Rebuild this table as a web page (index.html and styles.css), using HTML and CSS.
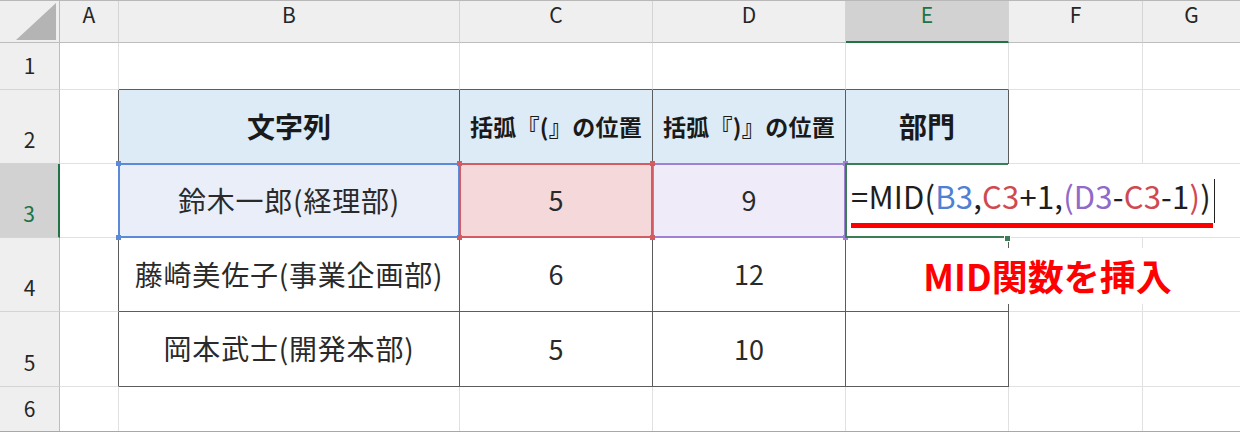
FILE: index.html
```html
<!DOCTYPE html>
<html lang="ja">
<head>
<meta charset="utf-8">
<title>MID関数</title>
<link rel="stylesheet" href="styles.css">
</head>
<body>
<div class="sheet">
  <div class="grid">
    <!-- header row -->
    <div class="corner">
      <svg width="60" height="42" viewBox="0 0 60 42"><polygon points="16,39 56,39 56,2" fill="#b4b4b4"/></svg>
    </div>
    <div class="hd">A</div>
    <div class="hd">B</div>
    <div class="hd">C</div>
    <div class="hd">D</div>
    <div class="hd sel">E</div>
    <div class="hd">F</div>
    <div class="hd last">G</div>

    <!-- row 1 -->
    <div class="rn">1</div>
    <div class="c"></div>
    <div class="c tt"></div>
    <div class="c tt"></div>
    <div class="c tt"></div>
    <div class="c tt"></div>
    <div class="c"></div>
    <div class="c last"></div>

    <!-- row 2 -->
    <div class="rn">2</div>
    <div class="c tl"></div>
    <div class="c t th big">文字列</div>
    <div class="c t th small">括弧『(』の位置</div>
    <div class="c t th small">括弧『)』の位置</div>
    <div class="c t th big">部門</div>
    <div class="c"></div>
    <div class="c last"></div>

    <!-- row 3 -->
    <div class="rn sel">3</div>
    <div class="c tl"></div>
    <div class="c t ref ref-b"><span class="txt">鈴木一郎(経理部)</span></div>
    <div class="c t ref ref-c">5</div>
    <div class="c t ref ref-d">9</div>
    <div class="c t active">
      <div class="editor"><span class="k">=MID(</span><span class="b">B3</span><span class="k">,</span><span class="r">C3</span><span class="k">+1,</span><span class="p">(D3</span><span class="k">-</span><span class="r">C3</span><span class="k">-1</span><span class="r">)</span><span class="k">)</span><span class="cursor"></span></div>
    </div>
    <div class="c"></div>
    <div class="c last"></div>

    <!-- row 4 -->
    <div class="rn">4</div>
    <div class="c tl"></div>
    <div class="c t"><span class="txt">藤崎美佐子(事業企画部)</span></div>
    <div class="c t">6</div>
    <div class="c t">12</div>
    <div class="c t"></div>
    <div class="c"></div>
    <div class="c last"></div>

    <!-- row 5 -->
    <div class="rn">5</div>
    <div class="c tl"></div>
    <div class="c t"><span class="txt">岡本武士(開発本部)</span></div>
    <div class="c t">5</div>
    <div class="c t">10</div>
    <div class="c t"></div>
    <div class="c"></div>
    <div class="c last"></div>

    <!-- row 6 -->
    <div class="rn bottom">6</div>
    <div class="c bottom"></div>
    <div class="c bottom"></div>
    <div class="c bottom"></div>
    <div class="c bottom"></div>
    <div class="c bottom"></div>
    <div class="c bottom"></div>
    <div class="c bottom last"></div>
  </div>
  <div class="underline"></div>
  <div class="note">MID関数を挿入</div>
</div>
</body>
</html>
```

FILE: styles.css
```css
* { box-sizing: border-box; }

html, body {
  margin: 0;
  padding: 0;
  background: #ffffff;
}

body {
  font-family: "Noto Sans CJK JP", "Noto Sans", sans-serif;
  color: #222222;
}

.sheet {
  position: relative;
  width: 1240px;
  height: 432px;
  border-top: 1px solid #b8b8b8;
  border-bottom: 1px solid #a8a8a8;
  overflow: hidden;
}

.grid {
  display: grid;
  grid-template-columns: 60px 59px 341px 193px 193px 163px 134px 97px;
  grid-template-rows: 42px 47px 74px 74px 74px 75px 44px;
}

/* header cells */
.corner {
  background: #efefef;
  border-right: 1px solid #bdbdbd;
  border-bottom: 1px solid #bdbdbd;
}
.corner svg { display: block; }

.hd {
  background: #efefef;
  border-right: 1px solid #d4d4d4;
  border-bottom: 1px solid #bdbdbd;
  display: flex;
  justify-content: center;
  align-items: flex-start;
  padding-top: 1px;
  font-size: 21px;
  line-height: 1.2;
  color: #262626;
}
.hd.sel {
  background: #d2d2d2;
  color: #217346;
  border-bottom: 2px solid #217346;
}
.hd.last { border-right: none; }

.rn {
  background: #efefef;
  border-right: 1px solid #bdbdbd;
  border-bottom: 1px solid #d4d4d4;
  display: flex;
  justify-content: center;
  align-items: flex-end;
  padding-bottom: 11px;
  font-size: 21px;
  line-height: 1.2;
  color: #262626;
}
.rn.sel {
  background: #d2d2d2;
  color: #217346;
  border-right: 2px solid #217346;
}
.rn.bottom { border-bottom: none; padding-bottom: 10px; }

/* body cells */
.c {
  position: relative;
  border-right: 1px solid #e1e1e1;
  border-bottom: 1px solid #e1e1e1;
  display: flex;
  justify-content: center;
  align-items: center;
  font-size: 27px;
  line-height: 1.2;
  white-space: nowrap;
  color: #2a2a2a;
}
.c .txt {
  font-size: 28px;
  letter-spacing: 0.8px;
}
.c.last { border-right: none; }
.c.bottom { border-bottom: none; }

.tt { border-bottom: 1px solid #5c5c5c; }
.tl { border-right: 1px solid #5c5c5c; }
.t {
  border-right: 1px solid #5c5c5c;
  border-bottom: 1px solid #5c5c5c;
}

.th {
  background: #ddebf7;
  font-weight: 700;
  color: #1a1a1a;
}
.th.big { font-size: 28px; }
.th.small { font-size: 23px; letter-spacing: 0.3px; }

/* formula reference highlights */
.ref::before {
  content: "";
  position: absolute;
  top: -1px;
  left: -1px;
  right: -1px;
  bottom: -1px;
  border: 2px solid var(--rc);
  z-index: 2;
}
.ref::after {
  content: "";
  position: absolute;
  top: -3px;
  left: -3px;
  width: 5px;
  height: 5px;
  background: var(--rc);
  box-shadow: var(--w) 0 0 var(--rc), 0 var(--h) 0 var(--rc), var(--w) var(--h) 0 var(--rc);
  z-index: 3;
}
.ref-b { --rc: #5b8ad8; --w: 341px; --h: 74px; background: #e9eef8; }
.ref-c { --rc: #d45b61; --w: 193px; --h: 74px; background: #f5d8da; }
.ref-d { --rc: #a080d3; --w: 193px; --h: 74px; background: #efebf8; }
.ref-c::before, .ref-c::after { z-index: 4; }

/* active cell in edit mode */
.active { z-index: 5; }
.active::before {
  content: "";
  position: absolute;
  top: -1px;
  left: -1px;
  right: 0;
  bottom: -1px;
  border-top: 2px solid #3b7d55;
  border-left: 2px solid #3b7d55;
  border-bottom: 2px solid #3b7d55;
  z-index: 6;
}
.active::after {
  content: "";
  position: absolute;
  right: -3px;
  bottom: -5px;
  width: 5px;
  height: 5px;
  background: #3b7d55;
  border: 1px solid #ffffff;
  z-index: 7;
}

.editor {
  position: absolute;
  left: 0;
  top: 0;
  bottom: 0;
  width: 372px;
  background: #ffffff;
  display: flex;
  align-items: center;
  padding-left: 5px;
  padding-bottom: 10px;
  font-size: 31px;
  letter-spacing: 0.2px;
  line-height: 1.2;
  white-space: nowrap;
  color: #1e1e1e;
  z-index: 5;
}
.editor .b { color: #4f80d3; }
.editor .r { color: #cf4a50; }
.editor .p { color: #9069c9; }
.cursor {
  display: inline-block;
  flex: none;
  width: 1px;
  height: 44px;
  background: #222222;
  margin-left: 3px;
  margin-top: 10px;
}

/* annotations */
.underline {
  position: absolute;
  left: 851px;
  top: 222px;
  width: 362px;
  height: 5px;
  background: #ff0000;
  z-index: 10;
}

.note {
  position: absolute;
  left: 880px;
  top: 247px;
  width: 335px;
  height: 56px;
  background: #ffffff;
  display: flex;
  justify-content: center;
  align-items: center;
  font-size: 36px;
  font-weight: 700;
  color: #ff0000;
  line-height: 1.1;
  z-index: 10;
}
```
